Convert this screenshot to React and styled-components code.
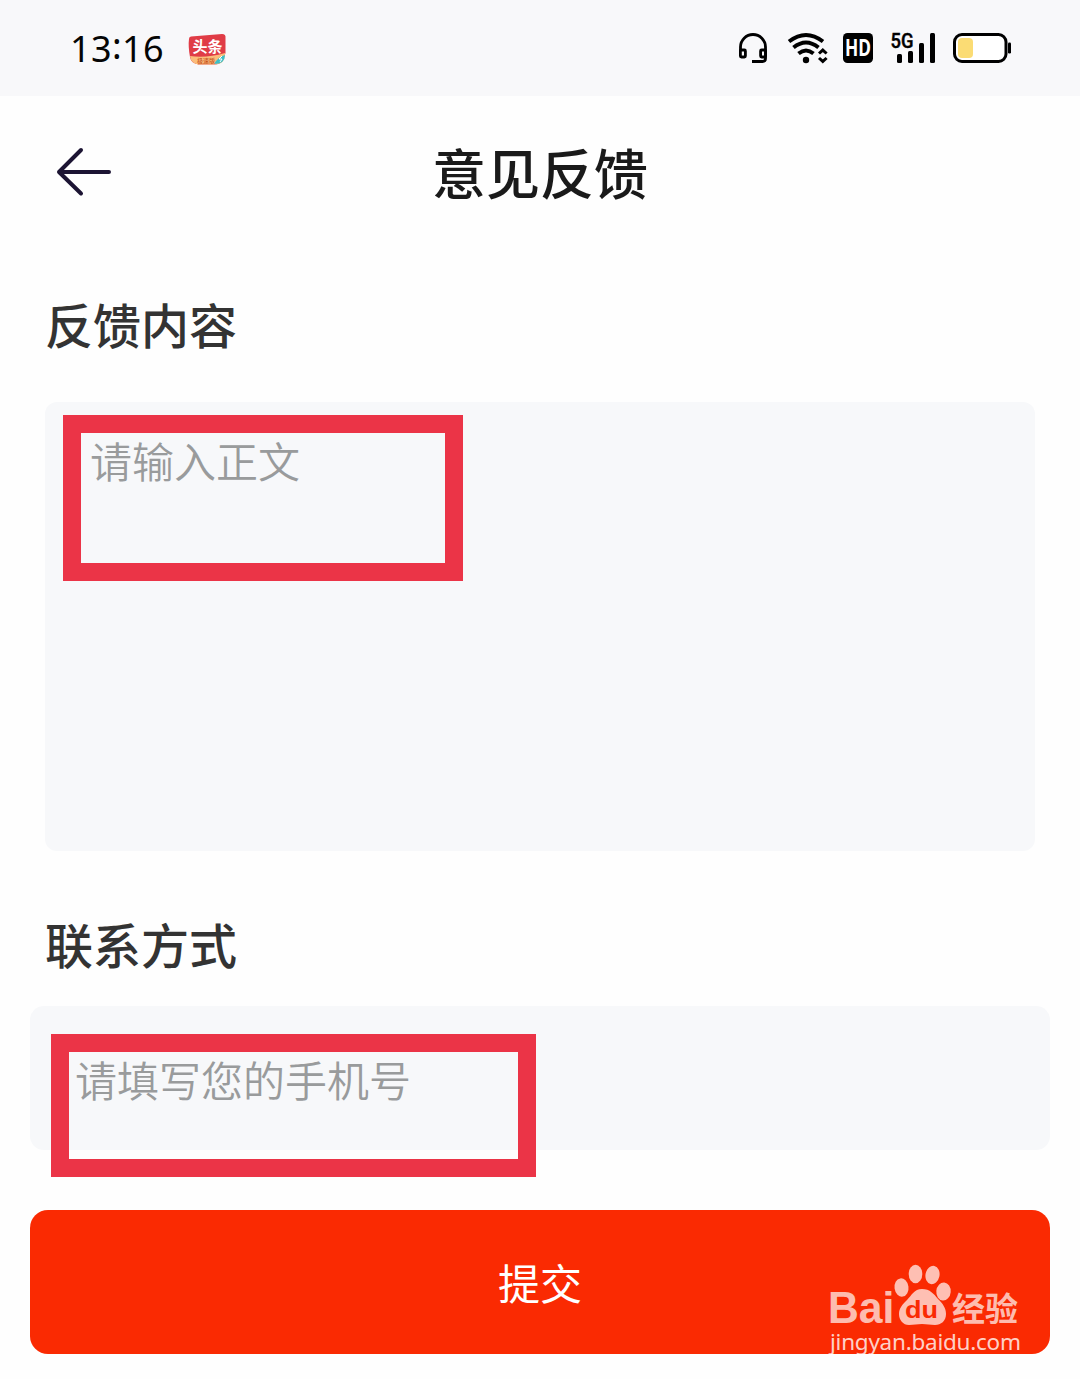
import React from 'react';
import styled, { createGlobalStyle } from 'styled-components';

const fonts = {
  cjk: "'Noto Sans CJK SC', 'Noto Sans', sans-serif",
  latin: "'Noto Sans', 'Open Sans', sans-serif",
};

const GlobalStyle = createGlobalStyle`
  * { box-sizing: border-box; }
  body {
    margin: 0;
    background: #fefefe;
    font-family: ${fonts.cjk};
  }
`;

const Screen = styled.div`
  width: 1080px;
  height: 1379px;
  display: flex;
  flex-direction: column;
  overflow: hidden;
  background: #fefefe;
`;

const StatusBar = styled.div`
  height: 96px;
  flex: none;
  display: flex;
  align-items: center;
  justify-content: space-between;
  padding: 0 69px 0 70px;
  background: #f8f8fa;
`;

const StatusGroup = styled.div`
  display: flex;
  align-items: center;
  gap: ${({ $gap }) => $gap}px;

  svg {
    display: block;
    overflow: visible;
  }
`;

const Clock = styled.span`
  width: 94px;
  padding-top: 2px;
  font-family: ${fonts.latin};
  font-size: 36px;
  line-height: 48px;
  letter-spacing: 0.4px;
  color: #050505;
  white-space: nowrap;
`;

const Colon = styled.span`
  vertical-align: 3px;
  line-height: 1;
`;

const Header = styled.header`
  height: 152px;
  flex: none;
  display: grid;
  grid-template-columns: 56px 1fr 56px;
  align-items: center;
  padding: 0 56px;
`;

const BackButton = styled.button`
  padding: 0;
  border: none;
  background: none;
  height: 50px;
  cursor: pointer;

  svg {
    display: block;
  }
`;

const Title = styled.h1`
  margin: 0;
  text-align: center;
  font-size: 54px;
  font-weight: 500;
  line-height: 80px;
  color: #1a1a1a;
`;

const Form = styled.form`
  display: flex;
  flex-direction: column;
  padding: 0 30px;
`;

const Label = styled.label`
  height: ${({ $height }) => $height}px;
  padding: ${({ $top }) => $top}px 0 0 15px;
  font-size: 48px;
  font-weight: 500;
  line-height: 72px;
  color: #333;
`;

const Field = styled.div`
  height: ${({ $height }) => $height}px;
  margin: 0 ${({ $inset }) => $inset}px;
  padding: ${({ $pad }) => $pad};
  border-radius: ${({ $radius }) => $radius}px;
  background: #f7f8fa;
`;

const Highlight = styled.div`
  width: ${({ $width }) => $width}px;
  height: ${({ $height }) => $height}px;
  padding-left: ${({ $pad }) => $pad}px;
  border: 18px solid #eb3447;
`;

const Placeholder = styled.span`
  display: block;
  font-size: 42px;
  font-weight: 350;
  line-height: 53px;
  color: #999b9c;
  white-space: nowrap;
`;

const SubmitButton = styled.button`
  position: relative;
  height: 144px;
  margin-top: 60px;
  padding: 0;
  border: none;
  border-radius: 18px;
  background: #fa2a02;
  color: #fff;
  font-family: inherit;
  font-size: 42px;
  line-height: 60px;
  cursor: pointer;
`;

const Watermark = styled.svg`
  position: absolute;
  right: 22px;
  bottom: -6px;
  overflow: visible;
`;

function AppBadge() {
  return (
    <svg width="38" height="32" viewBox="188 34 38 32">
      <path d="M191 38.500L222 36Q226 36 225.500 40V55L223 62Q220 67 213 66.500H199Q191 66 190 59Q188 48 189 41Q189 38.500 191 38.500Z" fill="#e03c46" />
      <path d="M190 58Q206 60.500 225 55Q225.500 66.500 214 66.500H199Q191 66 190 58Z" fill="#fbbd7b" />
      <path d="M214 66Q218 59 225 57Q225 66 214 66Z" fill="#3cbfc8" />
      <path d="M222 58l-3 3h3l-2 3" stroke="#fff" strokeWidth="1" fill="none" />
      <text x="192.500" y="54" fontSize="15" fontWeight="700" fill="#fff" fontFamily={fonts.cjk}>头条</text>
      <text x="197" y="64.500" fontSize="6" fontWeight="500" fill="#c8541f" fontFamily={fonts.cjk}>极速版</text>
    </svg>
  );
}

function HeadsetIcon() {
  return (
    <svg width="33" height="32" viewBox="738 32 33 32" fill="none" stroke="#000" strokeWidth="2.800">
      <path d="M740.500 51V47a12.500 12.500 0 0 1 25 0V58.500q0 3-3 3H752" />
      <rect x="740.400" y="50" width="5" height="7" rx="1" />
      <rect x="760.600" y="50" width="5" height="7" rx="1" />
    </svg>
  );
}

function WifiIcon() {
  return (
    <svg width="40" height="32" viewBox="787 32 40 32" fill="none" stroke="#000" strokeWidth="4">
      <path d="M789 41.500Q806 28.500 823 41.500" />
      <path d="M793.500 47.500Q806 37.500 818.500 47.500" />
      <path d="M798.500 53.500Q806 47.500 813.500 53.500" />
      <circle cx="806" cy="60" r="3.200" fill="#000" stroke="none" />
      <path d="M819 53.500l3.800-3.400 3.800 3.400M819 58l3.800 3.400 3.800-3.400" strokeWidth="3" />
    </svg>
  );
}

function HdIcon() {
  return (
    <svg width="32" height="32" viewBox="843 32 32 32">
      <rect x="843" y="33" width="30" height="30" rx="4.500" fill="#000" />
      <text x="845" y="56" fontSize="22.500" fontWeight="700" textLength="26" lengthAdjust="spacingAndGlyphs" fill="#fff" fontFamily="'Noto Sans', sans-serif">HD</text>
    </svg>
  );
}

function SignalIcon() {
  return (
    <svg width="46" height="32" viewBox="891 32 46 32">
      <text x="890.500" y="47.500" fontSize="19.500" fontWeight="500" textLength="23" lengthAdjust="spacingAndGlyphs" fill="#000" stroke="#000" strokeWidth="0.400" fontFamily="Roboto, sans-serif">5G</text>
      <rect x="897" y="54" width="5" height="9" rx="1.500" />
      <rect x="908" y="51" width="5" height="12" rx="1.500" />
      <rect x="919" y="43" width="5" height="20" rx="1.500" />
      <rect x="930" y="33" width="5" height="30" rx="1.500" />
    </svg>
  );
}

function BatteryIcon() {
  return (
    <svg width="58" height="32" viewBox="953 32 58 32">
      <rect x="954.500" y="34.500" width="51.500" height="27" rx="7.500" fill="#fff" stroke="#000" strokeWidth="3" />
      <rect x="958" y="38" width="15" height="20" rx="4" fill="#fbdc74" />
      <rect x="1008" y="42.500" width="3" height="11" rx="1.300" />
    </svg>
  );
}

function BaiduWatermark() {
  return (
    <Watermark width="200" height="96" viewBox="828 1264 200 96" fill="#fff" fillOpacity="0.7">
      <text x="828" y="1323" fontSize="44" fontWeight="700" textLength="66.500" lengthAdjust="spacingAndGlyphs" fontFamily="'Liberation Sans', sans-serif">Bai</text>
      <ellipse cx="901.500" cy="1287.500" rx="7" ry="9.200" transform="rotate(-8 901.500 1287.500)" />
      <ellipse cx="915.500" cy="1274" rx="6.800" ry="9.300" />
      <ellipse cx="932.500" cy="1275" rx="7" ry="9.200" transform="rotate(12 932.500 1275)" />
      <ellipse cx="943.500" cy="1291.500" rx="7.200" ry="9" transform="rotate(5 943.500 1291.500)" />
      <path d="M922 1289c8 0 12 5 16 10 5 5 8 9 8 15 0 7-5 11-11 11-5 0-8-1-13-1s-8 1-13 1c-6 0-10-5-10-11s4-10 8-14c5-5 7-11 15-11z" />
      <text x="905" y="1318" fontSize="24" fontWeight="700" textLength="33" lengthAdjust="spacingAndGlyphs" fill="#fa2a02" fillOpacity="1" fontFamily="'Liberation Sans', sans-serif">du</text>
      <text x="952" y="1321" fontSize="33" fontWeight="700" fontFamily={fonts.cjk}>经验</text>
      <text x="830" y="1349.500" fontSize="22.500" textLength="191" fillOpacity="0.8" fontFamily={fonts.latin}>jingyan.baidu.com</text>
    </Watermark>
  );
}

export default function App() {
  return (
    <>
      <GlobalStyle />
      <Screen>
        <StatusBar>
          <StatusGroup $gap={24}>
            <Clock>13<Colon>:</Colon>16</Clock>
            <AppBadge />
          </StatusGroup>
          <StatusGroup $gap={16}>
            <HeadsetIcon />
            <WifiIcon />
            <HdIcon />
            <SignalIcon />
            <BatteryIcon />
          </StatusGroup>
        </StatusBar>

        <Header>
          <BackButton aria-label="返回">
            <svg width="56" height="50" viewBox="0 0 56 50" fill="none" stroke="#1c1433" strokeWidth="4" strokeLinecap="round" strokeLinejoin="round">
              <path d="M25 3L3 25l22 21.500M3 25h50" />
            </svg>
          </BackButton>
          <Title>意见反馈</Title>
        </Header>

        <Form onSubmit={(e) => e.preventDefault()}>
          <Label $height={154} $top={39}>反馈内容</Label>
          <Field $height={449} $inset={15} $radius={12} $pad="13px 18px">
            <Highlight $width={400} $height={166} $pad={9}>
              <Placeholder>请输入正文</Placeholder>
            </Highlight>
          </Field>

          <Label $height={155} $top={56}>联系方式</Label>
          <Field $height={144} $inset={0} $radius={14} $pad="28px 21px 0">
            <Highlight $width={485} $height={143} $pad={6}>
              <Placeholder>请填写您的手机号</Placeholder>
            </Highlight>
          </Field>

          <SubmitButton type="submit">
            提交
            <BaiduWatermark />
          </SubmitButton>
        </Form>
      </Screen>
    </>
  );
}
